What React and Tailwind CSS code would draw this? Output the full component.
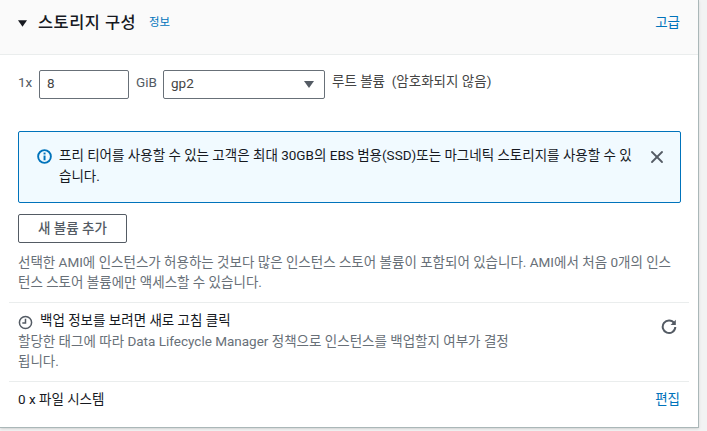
import { X } from "lucide-react";

function Chevron({ className }) {
    return (
        <svg viewBox="0 0 10 7" className={className}>
            <path d="M0 0h10L5 7z" fill="currentColor" />
        </svg>
    );
}

function InfoIcon() {
    return (
        <svg viewBox="0 0 16 16" className="w-[15px] h-[15px] text-[#0073bb] shrink-0" fill="none">
            <circle cx="8" cy="8" r="6.8" stroke="currentColor" strokeWidth="2" />
            <rect x="7" y="7" width="2.1" height="5" fill="currentColor" />
            <rect x="7" y="3.8" width="2.1" height="2" fill="currentColor" />
        </svg>
    );
}

function ClockIcon() {
    return (
        <svg viewBox="0 0 16 16" className="w-[15px] h-[15px] text-[#545b64] shrink-0 mt-[3px]" fill="none">
            <circle cx="8" cy="8" r="6.5" stroke="currentColor" strokeWidth="1.6" />
            <path d="M8 4v4.6H4.6" stroke="currentColor" strokeWidth="1.6" />
        </svg>
    );
}

function RefreshIcon() {
    return (
        <svg viewBox="0 0 16 16" className="w-[16px] h-[16px] text-[#545b64]" fill="none">
            <path d="M13.2 4.2A6.3 6.3 0 1 0 14.3 8" stroke="currentColor" strokeWidth="2" />
            <path d="M14.8 0.8v5.2H9.6z" fill="currentColor" />
        </svg>
    );
}

export default function App() {
    return (
        <div className="w-[707px] h-[431px] overflow-hidden bg-[#f2f3f3] font-['Roboto','Noto_Sans_CJK_KR',sans-serif] text-[13.5px] text-[#16191f]">
            <div className="w-[699px] h-[428px] bg-white border-r border-b border-[#aab7b8] shadow-sm">
                {/* Header */}
                <div className="h-[55px] bg-[#fafafa] border-b border-[#eaeded] flex items-start justify-between pl-[18px] pr-[18px]">
                    <div className="flex items-center mt-[11px] h-[24px]">
                        <Chevron className="w-[9px] h-[7px] text-[#16191f] mt-[1px]" />
                        <span className="ml-[11px] text-[16.4px] font-medium tracking-[0.5px]">스토리지 구성</span>
                        <span className="ml-[13px] text-[11.4px] text-[#0073bb]">정보</span>
                    </div>
                    <span className="mt-[12px] text-[#0073bb]">고급</span>
                </div>

                {/* Volume row */}
                <div className="flex items-start pl-[18px] mt-[15px] h-[28px]">
                    <span className="w-[21px] mt-[2px] text-[#545b64]">1x</span>
                    <div className="w-[90px] h-[29px] border border-[#687078] rounded-[2px] flex items-center pl-[7px] pb-[2px] text-[#444]">8</div>
                    <span className="ml-[7px] w-[27px] mt-[2px] text-[#545b64]">GiB</span>
                    <div className="w-[162px] h-[29px] border border-[#687078] rounded-[2px] flex items-center justify-between pl-[7px] pr-[10px] text-[#444]">
                        <span className="pb-[2px]">gp2</span>
                        <Chevron className="w-[10px] h-[7px] text-[#545b64]" />
                    </div>
                    <span className="ml-[7px] mt-[1px] whitespace-pre text-[#444]">루트 볼륨  (암호화되지 않음)</span>
                </div>

                {/* Info alert */}
                <div className="ml-[18px] mt-[33px] w-[663px] h-[72px] bg-[#f1faff] border border-[#0073bb] rounded-[2px] flex items-start pl-[18px] pt-[13px]">
                    <div className="mt-[4px] mr-[7px]"><InfoIcon /></div>
                    <p className="w-[573px] leading-[21px] text-[#16191f]">
                        프리 티어를 사용할 수 있는 고객은 최대 30GB의 EBS 범용(SSD)또는 마그네틱 스토리지를 사용할 수 있습니다.
                    </p>
                    <X className="w-[20px] h-[20px] text-[#545b64] ml-[15px] mt-[2px] shrink-0" strokeWidth={2.2} />
                </div>

                {/* Add volume */}
                <div className="ml-[18px] mt-[11px] w-[109px] h-[29px] border border-[#545b64] rounded-[2px] flex items-center justify-center font-medium text-[#545b64]">
                    새 볼륨 추가
                </div>
                <p className="ml-[18px] mt-[9px] w-[660px] leading-[20px] text-[#687078]">
                    선택한 AMI에 인스턴스가 허용하는 것보다 많은 인스턴스 스토어 볼륨이 포함되어 있습니다. AMI에서 처음 0개의 인스턴스 스토어 볼륨에만 액세스할 수 있습니다.
                </p>

                {/* Backup */}
                <div className="ml-[9px] mr-[9px] mt-[10px] border-t border-[#eaeded] pt-[7px] h-[79px] flex justify-between">
                    <div className="pl-[9px]">
                        <div className="flex items-center h-[21px]">
                            <ClockIcon />
                            <span className="ml-[7px] text-[#16191f]">백업 정보를 보려면 새로 고침 클릭</span>
                        </div>
                        <p className="w-[495px] leading-[20px] text-[#687078]">
                            할당한 태그에 따라 Data Lifecycle Manager 정책으로 인스턴스를 백업할지 여부가 결정 됩니다.
                        </p>
                    </div>
                    <div className="mt-[9px] mr-[12px]"><RefreshIcon /></div>
                </div>

                {/* File systems */}
                <div className="ml-[9px] mr-[9px] border-t border-[#eaeded] pt-[7px] pl-[9px] pr-[9px] flex justify-between">
                    <span className="text-[#16191f]">0 x 파일 시스템</span>
                    <span className="text-[#0073bb]">편집</span>
                </div>
            </div>
        </div>
    );
}
